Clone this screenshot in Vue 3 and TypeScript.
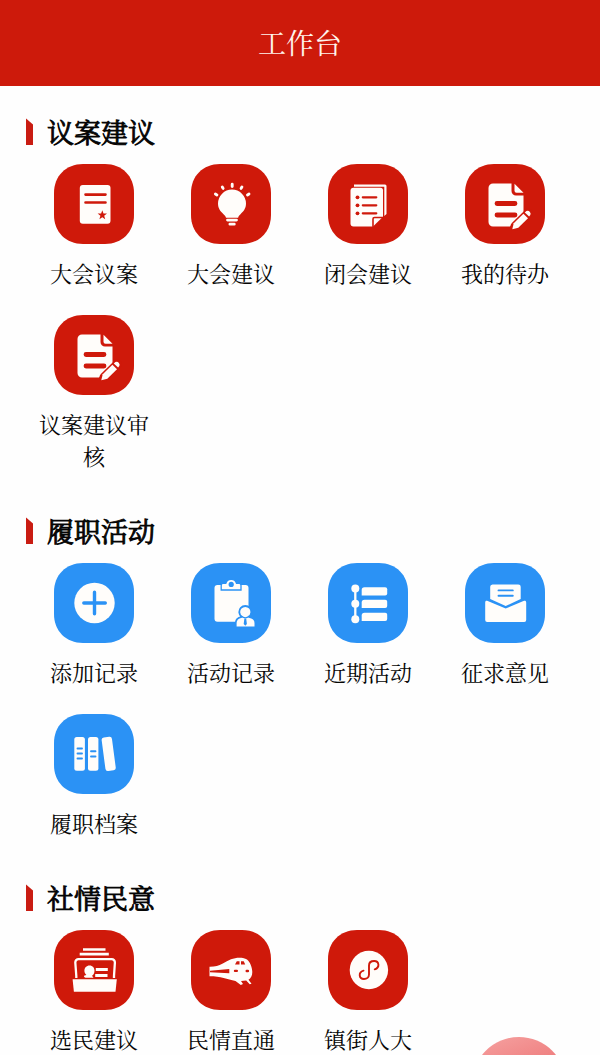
<script setup lang="ts">
type IconName =
  | 'motion' | 'bulb' | 'pages' | 'edit' | 'add' | 'clipboard'
  | 'timeline' | 'mail' | 'books' | 'ballot' | 'train' | 'mini'

interface Entry {
  label: string
  icon: IconName
}

interface Section {
  title: string
  tone: 'red' | 'blue'
  entries: Entry[]
}

const sections: Section[] = [
  {
    title: '议案建议',
    tone: 'red',
    entries: [
      { label: '大会议案', icon: 'motion' },
      { label: '大会建议', icon: 'bulb' },
      { label: '闭会建议', icon: 'pages' },
      { label: '我的待办', icon: 'edit' },
      { label: '议案建议审核', icon: 'edit' },
    ],
  },
  {
    title: '履职活动',
    tone: 'blue',
    entries: [
      { label: '添加记录', icon: 'add' },
      { label: '活动记录', icon: 'clipboard' },
      { label: '近期活动', icon: 'timeline' },
      { label: '征求意见', icon: 'mail' },
      { label: '履职档案', icon: 'books' },
    ],
  },
  {
    title: '社情民意',
    tone: 'red',
    entries: [
      { label: '选民建议', icon: 'ballot' },
      { label: '民情直通', icon: 'train' },
      { label: '镇街人大', icon: 'mini' },
    ],
  },
]
</script>

<template>
  <div class="page">
    <header class="bar"><h1>工作台</h1></header>
    <main class="content">
      <section v-for="s in sections" :key="s.title" class="section">
        <h2 class="heading"><i class="marker"></i><span class="title">{{ s.title }}</span></h2>
        <div class="grid">
          <div v-for="e in s.entries" :key="e.label" class="entry">
            <svg class="tile" :class="s.tone" viewBox="0 0 80 80" stroke-linecap="round" stroke-linejoin="round">
              <path class="c" d="M29 0H51C68 0 80 12 80 29V51C80 68 68 80 51 80H29C12 80 0 68 0 51V29C0 12 12 0 29 0z" />
              <g v-if="e.icon === 'motion'">
                <rect class="w" x="25.8" y="21" width="30.7" height="38.7" rx="3" />
                <path class="cut" d="M31.5 30.6H51.5M31.5 38.5H51.5" stroke-width="2.6" />
                <path class="c" d="M48.3 46.2l1.2 3.3 3.5.1-2.800 2.200 1 3.400-2.900-2-2.900 2 1-3.400-2.800-2.200 3.500-.1z" />
              </g>
              <g v-else-if="e.icon === 'bulb'">
                <path class="w" d="M41 25.600a14 14 0 0 1 14 14c0 5-2.600 8-5.500 10.600-1.600 1.500-2.100 2.200-2.400 3.600H35c-.3-1.400-.9-2.100-2.500-3.600C29.600 47.600 27 44.600 27 39.600a14 14 0 0 1 14-14z" />
                <path class="line" d="M36.500 56.100H45.500M38.900 60.200H43.300" stroke-width="2.800" />
                <path class="line" d="M41.200 20.300v2.200M31.300 23l.8 1.400M50.900 23l-.8 1.400M24.400 30l1.500.9M58 30l-1.500.9" stroke-width="2.900" />
              </g>
              <g v-else-if="e.icon === 'pages'">
                <path class="w" d="M26 20.500H57a1.500 1.500 0 0 1 1.500 1.500V50l-2.200 2V22.700H26z" />
                <path class="w" d="M25.500 23.800H52.500a2.500 2.500 0 0 1 2.500 2.500V52.800L45 62.500H25.500a3 3 0 0 1-3-3V26.800a3 3 0 0 1 3-3z" />
                <path class="cut" d="M45 62.500V55a1.500 1.500 0 0 1 1.500-1.500H55" stroke-width="1.600" />
                <path class="cut" d="M34.800 33.300H48.300M34.800 41.300H48.300M34.800 49.300H48.300" stroke-width="2.200" />
                <circle class="c" cx="29.500" cy="33.300" r="1.900" />
                <circle class="c" cx="29.500" cy="41.300" r="1.900" />
                <circle class="c" cx="29.500" cy="49.300" r="1.900" />
              </g>
              <g v-else-if="e.icon === 'edit'">
                <path class="w" d="M28 19.500H46.500V27a4.500 4.500 0 0 0 4.500 4.500H58.500V49L48 59.300 45 62.500H28a4.500 4.500 0 0 1-4.500-4.500V24a4.500 4.500 0 0 1 4.500-4.500z" />
                <path class="w" d="M49.500 19.700L58.500 28.800H51.500a2 2 0 0 1-2-2z" />
                <path class="cut" d="M32 39.500H50M32 51H50" stroke-width="4.800" />
                <path class="cut" d="M50 62.200L63.300 49.200" stroke-width="9" />
                <path class="w" d="M47.300 65.200l1.400-6L58.400 49.700l4.600 4.600-9.700 9.400z" />
                <path class="w" d="M59.800 48.400l1.600-1.400a2.800 2.800 0 0 1 2.500 0l1 .9a2.600 2.600 0 0 1 .4 3l-1.200 1.600z" />
              </g>
              <g v-else-if="e.icon === 'add'">
                <circle class="w" cx="40.500" cy="40" r="20.200" />
                <path class="cut" d="M29.800 40H51.300M40.500 29.200V50.800" stroke-width="3.400" />
              </g>
              <g v-else-if="e.icon === 'clipboard'">
                <rect class="w" x="23.500" y="22" width="34" height="36.800" rx="3" />
                <path class="w outline" d="M30.200 27V22.400a2 2 0 0 1 2-2H34.800a5.600 5.600 0 0 1 10.700 0h2.500a2 2 0 0 1 2 2V27z" stroke-width="1.300" stroke-linejoin="miter" />
                <circle class="c" cx="40.200" cy="21.400" r="2.600" />
                <path class="w outline" d="M44.700 64.500V60c0-3.400 3-5.600 6-6.200a6 6 0 1 1 7.200 0c3.500.6 6.500 2.800 6.500 6.200v4.500z" stroke-width="1.800" />
                <path class="cut" d="M50.500 53.300a6 6 0 0 0 7.600 0" stroke-width="1.300" />
                <path class="c" d="M53.400 55.500h1.800l.7 5.600-1.600 1.600-1.600-1.600z" />
              </g>
              <g v-else-if="e.icon === 'timeline'">
                <path class="line" d="M27.300 25.300V56.300" stroke-width="2.300" />
                <circle class="w" cx="27.300" cy="25.400" r="4" />
                <circle class="w" cx="27.300" cy="40.800" r="4" />
                <circle class="w" cx="27.300" cy="56.200" r="4" />
                <path class="w" d="M36.500 24.200H57.200a2 2 0 0 1 2 2v4.200a2 2 0 0 1-2 2H33.700V27a2.800 2.800 0 0 1 2.800-2.800z" />
                <path class="w" d="M36.500 36.800H57.200a2 2 0 0 1 2 2V43a2 2 0 0 1-2 2H33.700V39.600a2.800 2.800 0 0 1 2.800-2.800z" />
                <path class="w" d="M36.500 49.800H57.200a2 2 0 0 1 2 2V56a2 2 0 0 1-2 2H33.700V52.600a2.800 2.800 0 0 1 2.800-2.800z" />
              </g>
              <g v-else-if="e.icon === 'mail'">
                <path class="w" d="M27.500 21.400H53.300a2.400 2.400 0 0 1 2.400 2.400V36L40.700 43 25.200 36V23.800a2.400 2.400 0 0 1 2.300-2.400z" />
                <path class="cut" d="M33.500 27.400H47.800M33.500 32.800H47.800" stroke-width="1.900" />
                <path class="w" d="M20.200 39.500c0-1.700 1-2.200 2.500-1.500L40.700 45.500 58.500 38c1.500-.7 2.700-.2 2.700 1.500V57a2 2 0 0 1-2 2H22.200a2 2 0 0 1-2-2z" />
              </g>
              <g v-else-if="e.icon === 'books'">
                <rect class="w" x="20.300" y="23" width="10.600" height="33.800" rx="2.500" />
                <rect class="w" x="34" y="23" width="10.400" height="33.800" rx="2.500" />
                <rect class="w" x="49.500" y="23" width="10.400" height="33.800" rx="2.500" transform="rotate(-7.500 54.700 39.900)" />
                <path class="cut" d="M23.500 34.500H28M23.500 39.500H28M23.500 44.500H28M37 37.300H41.500M37 42.500H41.500" stroke-width="1.900" />
              </g>
              <g v-else-if="e.icon === 'ballot'" stroke-linecap="butt">
                <path class="line" d="M29 19.500H51.500M25.700 24.100H54.800" stroke-width="2.700" />
                <path class="line" d="M22.300 48V46L21.300 32.500a3.200 3.200 0 0 1 3.200-3.300H57.700a3.200 3.200 0 0 1 3.200 3.300L60 46v2" stroke-width="2.300" />
                <path class="w" d="M30.400 40.800c0-3 2-5.300 5.200-5.300 3 0 4.900 2.300 4.900 5.200 0 3-1.700 4.500-2.500 5.100l1.500 2H31.500c-1.500-.8-2-1.500-1-2.300l1.900-.6c-1.300-1-2-2.500-2-4.100z" />
                <path class="line" d="M41.800 39.400H53.800M41.200 45.500H53.500" stroke-width="3" />
                <path class="w" d="M18.600 49.200H62.800L61.500 61.700H19.900z" />
              </g>
              <g v-else-if="e.icon === 'train'">
                <path class="w" d="M18.500 36.800C29 37 34.500 31.500 40 29.300c4.500-1.800 11-2.200 15-.4 3.600 1.700 6.300 8 6.300 13.100 0 3.800-1.500 6.600-3.800 7.800l3 4-1.800.4-3.500-3.700-5.200.4 2 3.200-2.200.8L44.500 51C36 49 30 46.200 18.500 46.200z" />
                <path class="c" d="M19 40.800L38.300 39V43.300L19 42.300zM44 34.500l1.800-3.300h2.700v3.300zM50 31.200h2.700l1.500 3.300H50z" />
                <rect class="c" x="42.800" y="39.800" width="4.200" height="2.300" rx="1.100" />
                <rect class="c" x="54.500" y="39.800" width="3.600" height="2.500" rx="1.200" />
              </g>
              <g v-else>
                <circle class="w" cx="40.900" cy="40" r="19.200" />
                <path class="cut" d="M46.700 39.300c5.500-1.700 4.500-8.300-.5-8.300-3 0-5.200 1.700-5.200 4.500V44.500c0 2.800-2.200 4.500-5 4.500-5.200 0-6-6.800-.5-8.400" stroke-width="1.900" />
              </g>
            </svg>
            <span class="label">{{ e.label }}</span>
          </div>
        </div>
      </section>
    </main>
    <div class="floating"></div>
  </div>
</template>

<style>
body {
  margin: 0;
  background: #fefefe;
}
</style>

<style scoped>
.page {
  position: relative;
  height: 1055px;
  overflow: hidden;
  background: #fefefe;
  color: #050505;
  font-family: "Noto Serif CJK SC", "Noto Serif SC", "Songti SC", "Noto Sans CJK SC", serif;
}
.bar {
  box-sizing: border-box;
  height: 86px;
  display: flex;
  align-items: center;
  justify-content: center;
  padding-bottom: 2px;
  background: #cd1a0b;
}
.bar h1 {
  margin: 0;
  color: #fff4ed;
  font-size: 28px;
  line-height: 40px;
  font-weight: 400;
}
.content {
  display: flex;
  flex-direction: column;
  gap: 40px;
  padding: 28px 25.500px 0;
}
.heading {
  display: flex;
  align-items: center;
  gap: 14px;
  margin: 0 0 14px;
  height: 36px;
  font-size: 27px;
  line-height: 36px;
  font-weight: 400;
}
.title {
  -webkit-text-stroke: 0.9px currentColor;
}
.marker {
  width: 7.500px;
  height: 27px;
  margin-top: -1px;
  background: #c91c12;
  clip-path: polygon(0 0, 100% 24%, 100% 100%, 0 100%);
}
.grid {
  display: grid;
  grid-template-columns: repeat(4, 137px);
  row-gap: 25px;
}
.entry {
  display: flex;
  flex-direction: column;
  align-items: center;
}
.tile {
  width: 80px;
  height: 80px;
}
.red {
  --tone: #cf190a;
}
.blue {
  --tone: #2b92f5;
}
.w {
  fill: #fffdfa;
}
.c {
  fill: var(--tone);
}
.line {
  fill: none;
  stroke: #fffdfa;
}
.cut {
  fill: none;
  stroke: var(--tone);
}
.outline {
  stroke: var(--tone);
}
.label {
  width: 120px;
  margin-top: 13px;
  padding-bottom: 1px;
  font-size: 22px;
  line-height: 32px;
  text-align: center;
}
.floating {
  position: absolute;
  left: 472px;
  top: 1037px;
  width: 94px;
  height: 94px;
  border-radius: 50%;
  background: linear-gradient(160deg, #f6a3a2, #ec7273 55%);
}
</style>
